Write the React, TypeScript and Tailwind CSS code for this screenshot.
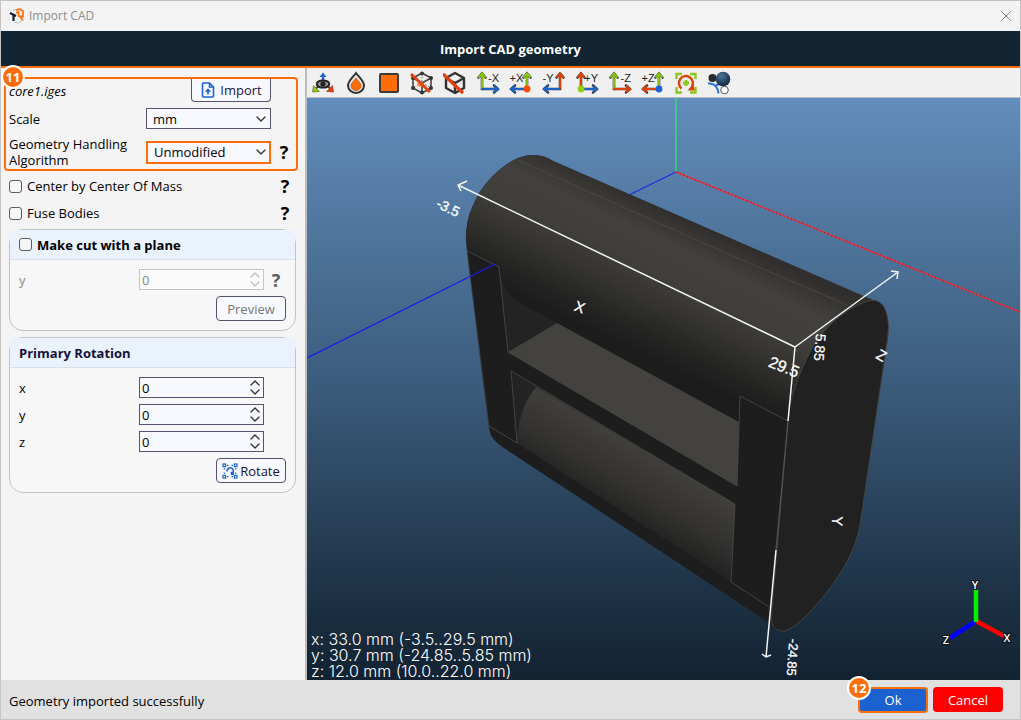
import React, { useState } from 'react';
import { X, ChevronDown, ChevronUp } from 'lucide-react';

const GREEN = '#86c40f';
const RED = '#dc430b';
const BLUE = '#1f62c4';

interface AxisIconProps {
  label: string;
  side: 'left' | 'right';
  up: string;
  across: string;
  dot?: string;
}

// side = where the vertical arrow stands, the horizontal one points away from it
const AxisIcon: React.FC<AxisIconProps> = ({ label, side, up, across, dot }) => {
  const x = side === 'left' ? 6 : 18;
  const tip = side === 'left' ? 22 : 2;
  const back = side === 'left' ? 18 : 6;
  const upArrow = `M${x} 18V3M${x - 3.5} 6.5L${x} 2.5L${x + 3.5} 6.5`;
  const acrossArrow = `M${x} 18H${tip}M${back} 14.5L${tip} 18L${back} 21.5`;
  return (
    <svg viewBox="0 0 24 24" className="size-6" fill="none">
      <path d={upArrow} stroke="#3a3a3a" strokeWidth="2.6" strokeLinecap="round" />
      <path d={acrossArrow} stroke="#3a3a3a" strokeWidth="2.6" strokeLinecap="round" />
      <path d={upArrow} stroke={up} strokeWidth="1.9" />
      <path d={acrossArrow} stroke={across} strokeWidth="1.9" />
      {dot && <circle cx={x} cy="18" r="3.4" fill={dot} />}
      <text
        x={side === 'left' ? 23 : 0.5}
        y="11"
        textAnchor={side === 'left' ? 'end' : 'start'}
        fontSize="11"
        fill="#222"
        className="font-['Liberation_Sans',sans-serif]"
      >
        {label}
      </text>
    </svg>
  );
};

const cube = 'M12 2L21 7V17L12 22L3 17V7ZM3 7L12 12L21 7M12 12V22';

const tools = [
  {
    name: 'Rotate view',
    icon: (
      <svg viewBox="0 0 24 24" className="size-6" fill="none">
        <path d="M12 11V5" stroke={BLUE} strokeWidth="2.4" />
        <path d="M8.500 6L12 1.500L15.500 6Z" fill={BLUE} />
        <path d="M8 15L4 18M16 15L20 18" stroke="#444" strokeWidth="2" />
        <path d="M2.500 14.500L1.500 21L8.500 20.500Z" fill="#8cc81c" stroke="#456b08" strokeWidth=".6" />
        <path d="M21.500 14.500L22.500 21L15.500 20.500Z" fill="#e2410e" stroke="#8d2a0a" strokeWidth=".6" />
        <ellipse cx="12" cy="13" rx="6.200" ry="3.600" fill="#9b9b9b" stroke="#222" strokeWidth="2" />
        <circle cx="12" cy="13" r="2.600" fill="#222" />
      </svg>
    ),
  },
  {
    name: 'Material',
    icon: (
      <svg viewBox="0 0 24 24" className="size-6">
        <path d="M12 2C15.500 6.500 20 10 20 14.500A8 7.500 0 0 1 4 14.500C4 10 8.500 6.500 12 2Z" fill="#e4e4e4" stroke="#333" strokeWidth="2" />
        <path d="M12 7C14 10 17 12.300 17 14.800A5 4.700 0 0 1 7 14.800C7 12.300 10 10 12 7Z" fill="#ff6d0a" stroke="#b5500f" strokeWidth=".7" />
      </svg>
    ),
  },
  {
    name: 'Solid',
    icon: (
      <svg viewBox="0 0 24 24" className="size-6">
        <rect x="3" y="3" width="18" height="18" rx="1" fill="#ff6d0a" stroke="#3a3a3a" strokeWidth="2" />
      </svg>
    ),
  },
  {
    name: 'Hide vertices',
    icon: (
      <svg viewBox="0 0 24 24" className="size-6" fill="none">
        <path d={cube} stroke="#444" strokeWidth="1.600" />
        <path d="M12 2V12L3 17M12 12L21 17" stroke="#777" strokeWidth="1" strokeDasharray="2 1.500" />
        <g fill="#333">
          <circle cx="12" cy="2.500" r="2" /><circle cx="21" cy="7" r="2" /><circle cx="21" cy="17" r="2" />
          <circle cx="12" cy="21.500" r="2" /><circle cx="3" cy="17" r="2" /><circle cx="3" cy="7" r="2" />
        </g>
        <circle cx="10" cy="13" r="2.800" fill="#ff8a3c" />
        <path d="M1 3L20 21" stroke="#e2410e" strokeWidth="3" />
      </svg>
    ),
  },
  {
    name: 'Hide edges',
    icon: (
      <svg viewBox="0 0 24 24" className="size-6" fill="none">
        <path d={cube} stroke="#333" strokeWidth="2.400" strokeLinejoin="round" />
        <path d="M0 3L20 22" stroke="#e2410e" strokeWidth="3.200" />
      </svg>
    ),
  },
  { name: 'View -X', icon: <AxisIcon label="-X" side="left" up={GREEN} across={BLUE} /> },
  { name: 'View +X', icon: <AxisIcon label="+X" side="right" up={GREEN} across={BLUE} dot="#ff4a0a" /> },
  { name: 'View -Y', icon: <AxisIcon label="-Y" side="right" up={RED} across={BLUE} /> },
  { name: 'View +Y', icon: <AxisIcon label="+Y" side="left" up={RED} across={BLUE} dot="#8fd010" /> },
  { name: 'View -Z', icon: <AxisIcon label="-Z" side="left" up={GREEN} across={RED} /> },
  { name: 'View +Z', icon: <AxisIcon label="+Z" side="right" up={GREEN} across={RED} dot="#1b62d8" /> },
  {
    name: 'Fit to view',
    icon: (
      <svg viewBox="0 0 24 24" className="size-6" fill="none">
        <path d="M2.500 8V3H8M16 3H21.500V8M21.500 16V21.500H16M8 21.500H2.500V16" stroke="#8cc81c" strokeWidth="2.400" />
        <path d="M7.500 17.500A7 7 0 1 1 18 15.500" stroke={RED} strokeWidth="2.400" />
        <path d="M13.500 19.500L20.500 19.500L19.500 12.500Z" fill={RED} />
        <path d="M12 9V15M9 12H15" stroke="#8cc81c" strokeWidth="2.800" />
      </svg>
    ),
  },
  {
    name: 'Scene objects',
    icon: (
      <svg viewBox="0 0 24 24" className="size-6" fill="none">
        <defs>
          <radialGradient id="ball" cx=".4" cy=".3" r=".7">
            <stop offset="0" stopColor="#4d779d" />
            <stop offset="1" stopColor="#10283d" />
          </radialGradient>
        </defs>
        <path d="M1 12.500C6 12 10.500 14 11.500 22.500M9 14.500L14 12" stroke="#2b6fe0" strokeWidth="2" />
        <circle cx="5.500" cy="7" r="4" fill="#252b28" />
        <circle cx="16" cy="8" r="7.300" fill="url(#ball)" />
        <circle cx="17.500" cy="19" r="3.800" fill="#fff" stroke="#555" strokeWidth="1" />
      </svg>
    ),
  },
];

const Help = ({ disabled }: { disabled?: boolean }) => (
  <button
    type="button"
    aria-label="Help"
    disabled={disabled}
    className={`w-4 text-center text-lg leading-5 font-bold ${disabled ? 'text-[#5c5c5c]' : 'text-black'}`}
  >
    ?
  </button>
);

interface SelectProps {
  id: string;
  options: string[];
  active?: boolean;
}

const Select: React.FC<SelectProps> = ({ id, options, active }) => (
  <div className="relative flex w-[125px] shrink-0 items-center">
    <select
      id={id}
      className={`block w-full appearance-none bg-[#f8f9ff] pl-1.5 pr-5 outline-none ${
        active ? 'h-[23px] border-2 border-[#ff6d0a]' : 'h-[21px] border border-[#555273]'
      }`}
    >
      {options.map((o) => <option key={o}>{o}</option>)}
    </select>
    <ChevronDown size={16} strokeWidth={2} className="pointer-events-none absolute right-0.5 text-[#333]" />
  </div>
);

interface SpinProps {
  id: string;
  disabled?: boolean;
}

const SpinBox: React.FC<SpinProps> = ({ id, disabled }) => {
  const [value, setValue] = useState(0);
  return (
    <div className={`flex h-[21px] w-[125px] shrink-0 items-center border ${
      disabled ? 'border-[#c4c4c8] bg-[#fbfbfb] text-[#8a8a8a]' : 'border-[#555273] bg-[#f8f9ff]'
    }`}>
      <input
        id={id}
        inputMode="decimal"
        value={value}
        disabled={disabled}
        onChange={(e) => setValue(Number(e.target.value) || 0)}
        className="h-full min-w-0 flex-1 bg-transparent pl-0.5 outline-none"
      />
      <div className={`flex flex-col ${disabled ? 'text-[#c0c0c0]' : 'text-[#333]'}`}>
        <button type="button" aria-label="Increase" disabled={disabled} onClick={() => setValue(value + 1)} className="flex h-[9px] items-center overflow-hidden">
          <ChevronUp size={16} strokeWidth={2} />
        </button>
        <button type="button" aria-label="Decrease" disabled={disabled} onClick={() => setValue(value - 1)} className="flex h-[9px] items-center overflow-hidden">
          <ChevronDown size={16} strokeWidth={2} />
        </button>
      </div>
    </div>
  );
};

const checkboxClass =
  'size-[13px] shrink-0 appearance-none rounded-[3px] border border-[#5c5c5c] bg-[#f6f6f6] checked:bg-[#1b62d0]';

const smallButton =
  'flex items-center justify-center gap-0.5 border border-[#555273] bg-[#f8f9ff] font-medium';

const Badge = ({ children, className }: { children: React.ReactNode; className: string }) => (
  <span className={`absolute z-10 flex size-6 items-center justify-center rounded-full border-2 border-white bg-[#ff6d0a] font-bold text-white ${className}`}>
    {children}
  </span>
);

const Sidebar = () => (
  <aside className="w-[306px] shrink-0 border-r-2 border-[#bdbdbd] bg-[#f4f4f4] pt-[9px]">
    <div className="relative ml-[3px] mr-[7px] rounded border-2 border-[#ff6d0a] pb-px pl-[3px] pr-1">
      <Badge className="-left-[5px] -top-[14px]">11</Badge>
      <div className="flex h-[23px] items-center justify-between pr-[21px]">
        <span className="italic">core1.iges</span>
        <button type="button" className={`${smallButton} h-full w-20 gap-1 rounded-b border-t-0 text-[#1d1437]`}>
          <svg viewBox="0 0 16 16" className="size-4" fill="none" stroke="#1b62d0" strokeWidth="1.600">
            <path d="M9.500 1H3.500Q2.500 1 2.500 2V14Q2.500 15 3.500 15H12.500Q13.500 15 13.500 14V5Z" />
            <path d="M9.500 1V5H13.500M8 12.500V8M5.800 9.800L8 7.600L10.200 9.800" />
          </svg>
          Import
        </button>
      </div>
      <div className="mt-1.5 flex items-center justify-between pr-[21px]">
        <label htmlFor="scale">Scale</label>
        <Select id="scale" options={['mm', 'cm', 'm', 'inch']} />
      </div>
      <div className="mt-[7px] flex items-center">
        <label htmlFor="algorithm" className="flex-1">Geometry Handling Algorithm</label>
        <Select id="algorithm" options={['Unmodified', 'Simplified']} active />
        <div className="ml-[5px]"><Help /></div>
      </div>
    </div>

    <div className="flex flex-col gap-[7px] pl-2 pr-3 pt-[5px]">
      <div className="flex h-5 items-center gap-[5px]">
        <input id="center" type="checkbox" className={checkboxClass} />
        <label htmlFor="center" className="flex-1">Center by Center Of Mass</label>
        <Help />
      </div>
      <div className="flex h-5 items-center gap-[5px]">
        <input id="fuse" type="checkbox" className={checkboxClass} />
        <label htmlFor="fuse" className="flex-1">Fuse Bodies</label>
        <Help />
      </div>
    </div>

    <section className="ml-2 mr-[9px] mt-1.5 rounded-[14px] border border-[#c3c3c3] bg-[#f7f7f7] pb-[9px]">
      <div className="flex h-[30px] items-center gap-[5px] border-b border-[#dadfe8] bg-[#eaf2fe] pl-[9px] font-bold">
        <input id="cut" type="checkbox" className={checkboxClass} />
        <label htmlFor="cut">Make cut with a plane</label>
      </div>
      <div className="mt-[9px] flex items-center pl-[9px]">
        <label htmlFor="cut-y" className="w-30 text-[#8a8a8a]">y</label>
        <SpinBox id="cut-y" disabled />
        <div className="ml-1 flex"><Help disabled /></div>
      </div>
      <div className="mt-1.5 flex justify-end pr-[9px]">
        <button type="button" disabled className={`${smallButton} h-[25px] w-[70px] rounded text-[#777]`}>Preview</button>
      </div>
    </section>

    <section className="ml-2 mr-[9px] mt-1.5 rounded-[14px] border border-[#c3c3c3] bg-[#f7f7f7] pb-[9px]">
      <h2 className="flex h-[30px] items-center border-b border-[#dadfe8] bg-[#eaf2fe] pl-[9px] font-bold text-[#15103a]">
        Primary Rotation
      </h2>
      <div className="mt-[9px] flex flex-col gap-1.5 pl-[9px]">
        {['x', 'y', 'z'].map((axis) => (
          <div key={axis} className="flex items-center">
            <label htmlFor={`rotate-${axis}`} className="w-30">{axis}</label>
            <SpinBox id={`rotate-${axis}`} />
          </div>
        ))}
      </div>
      <div className="mt-1.5 flex justify-end pr-[9px]">
        <button type="button" className={`${smallButton} h-[25px] w-[70px] rounded text-[#14102e]`}>
          <svg viewBox="0 0 16 16" className="size-4" fill="none" stroke="#1b62d0" strokeWidth="1.200">
            <rect x="1" y="1" width="2.600" height="2.600" />
            <rect x="12.400" y="1" width="2.600" height="2.600" />
            <rect x="1" y="12.400" width="2.600" height="2.600" />
            <rect x="12.400" y="12.400" width="2.600" height="2.600" />
            <path d="M5 2.300H6.500M9.500 2.300H11M5 13.700H6.500M9.500 13.700H11M2.300 5V6.500M2.300 9.500V11M13.700 5V6.500M13.700 9.500V11" />
            <path d="M5 8.500A3.200 3.200 0 1 1 9.500 11M9.500 8.800V11.200H12" strokeWidth="1.500" />
          </svg>
          Rotate
        </button>
      </div>
    </section>
  </aside>
);

const Model = () => (
  <svg viewBox="307 98 713 582" preserveAspectRatio="xMidYMid slice" className="absolute inset-0 size-full" fill="none">
    <defs>
      <linearGradient id="barrel" gradientUnits="userSpaceOnUse" x1="700" y1="226" x2="635" y2="361">
        <stop offset="0" stopColor="#302f2d" />
        <stop offset=".2" stopColor="#42413d" />
        <stop offset=".4" stopColor="#403f3b" />
        <stop offset=".6" stopColor="#343330" />
        <stop offset=".8" stopColor="#242423" />
        <stop offset=".95" stopColor="#1c1c1c" />
      </linearGradient>
      <linearGradient id="lower" gradientUnits="userSpaceOnUse" x1="640" y1="448" x2="600" y2="516">
        <stop offset="0" stopColor="#403f3b" />
        <stop offset=".5" stopColor="#333230" />
        <stop offset="1" stopColor="#1d1d1d" />
      </linearGradient>
    </defs>

    <path d="M676 98V172" stroke="#2fdc78" strokeWidth="1.500" />
    <path d="M676 172L629 195" stroke="#2828e6" strokeWidth="1.200" />
    <path d="M676 172L1020 312" stroke="#f0303c" strokeWidth="1.500" />
    <path d="M676 172L1020 312" stroke="#a81822" strokeWidth="1.200" strokeDasharray="1 3" />

    {/* body */}
    <path
      d="M467 250C465 232 467 219 472 208C481 184 500 166 518 158C531 153 543 154 553 161L866 298C878 302 886 308 888 322C889 332 888 340 886 349L860 525C855 552 842 572 827 592C812 611 797 627 785 631C778 632 773 629 771 624L504 448C495 442 490 437 489 427Z"
      fill="#1d1d1d"
    />
    <path
      d="M467 250C465 232 467 219 472 208C481 184 500 166 518 158C531 153 543 154 553 161L873 300L790 421L740 396L739 422L557 323L519 302C506 294 502 280 499 267Z"
      fill="url(#barrel)"
    />
    <path
      d="M788 421C790 398 797 377 812 348C828 322 852 304 873 300C884 301 888 312 888.500 327C888 336 887 342 886 349L860 525C855 552 842 572 827 592C812 611 797 627 785 631C778 632 773 628 771 620Z"
      fill="#212121"
      stroke="#4b4a47"
      strokeWidth=".8"
    />
    <path d="M499 267C502 280 506 294 519 302L557 323L508 352Z" fill="#232323" />
    <path d="M508 352L557 323L739 422L737 486Z" fill="#43423e" />
    <path d="M511 371L536 387C523 403 518 420 517 443Z" fill="#232323" />
    <path d="M536 387L735 504L731 582L517 443C518 420 523 403 536 387Z" fill="url(#lower)" />
    <g stroke="#484745" strokeWidth=".9">
      <path d="M467 250L489 427" stroke="#3c3c3b" />
      <path d="M467 251L499 267L508 352L737 486" />
      <path d="M735 504L511 371L517 443L489 426" />
      <path d="M788 421L740 396L737 486M735 504L731 582L771 608" />
      <path d="M518 160L730 255L847 305" stroke="#4b4a46" />
      <path d="M788 421L776 550" stroke="#555" strokeWidth="1.200" />
    </g>

    <path d="M307 358L495 264" stroke="#1a1af0" strokeWidth="1.300" />

    {/* dimensions */}
    <g stroke="#f5f5f5" strokeWidth="1.500">
      <path d="M788 421L795 347L458 185M467 181L458 185L461 191" />
      <path d="M795 347L898 272M891 271L898 272L897 279" />
      <path d="M776 550L766 657M762 654L766 657L771 655" />
    </g>
    <g fill="#fff" stroke="#fff" strokeWidth=".3" fontSize="15" textAnchor="middle" className="font-['Liberation_Sans',sans-serif]">
      <text transform="translate(446 212) rotate(26)" fontSize="14">-3.5</text>
      <text transform="translate(782 372) rotate(22)" fontSize="16">29.5</text>
      <text transform="translate(815 347) rotate(94)" fontSize="14">5.85</text>
      <text transform="translate(788 657) rotate(94)" fontSize="13">-24.85</text>
      <text transform="translate(578 312) rotate(20)">X</text>
      <text transform="translate(879 360) rotate(30)">Z</text>
      <text transform="translate(832 521) rotate(92)">Y</text>
    </g>

    {/* orientation triad */}
    <g strokeWidth="4.500">
      <path d="M976 621L950 638" stroke="#0000ff" />
      <path d="M976 621L1004 636" stroke="#ff0000" />
      <path d="M976 622V590" stroke="#00f000" />
    </g>
    <g fill="#fff" stroke="#111" strokeWidth="2" paintOrder="stroke" fontSize="11" fontWeight="600" textAnchor="middle" className="font-['Open_Sans',sans-serif]">
      <text x="975" y="589">Y</text>
      <text x="1007" y="642">X</text>
      <text x="946" y="644">Z</text>
    </g>
  </svg>
);

const extents = [
  'x: 33.0 mm (-3.5..29.5 mm)',
  'y: 30.7 mm (-24.85..5.85 mm)',
  'z: 12.0 mm (10.0..22.0 mm)',
];

export default function App() {
  return (
    <div className="flex h-screen min-h-[600px] flex-col border border-[#c4c4c4] bg-[#f4f4f4] font-['Open_Sans','Noto_Sans',sans-serif] text-[13px] leading-4 text-black">
      <header className="flex h-[30px] shrink-0 items-center bg-[#f3f3f3] pl-2 pr-[5px]">
        <svg viewBox="0 0 16 16" className="size-4" fill="none">
          <path d="M4 2.500L8 1M5 14L9 15L13 12.500" stroke="#c4c4c4" strokeWidth="1" />
          <path d="M1 5L7 8M4.500 7V13" stroke="#14222f" strokeWidth="2.200" />
          <path d="M7 2.500L10.500 1L14 3V8.500L9.500 8V4L7 5M10.500 8L14 12.500" stroke="#ff6d0a" strokeWidth="1.700" />
        </svg>
        <span className="ml-1 flex-1 text-xs text-[#8e8e8e]">Import CAD</span>
        <button type="button" aria-label="Close" className="text-[#777]"><X size={18} strokeWidth={1.200} /></button>
      </header>
      <div className="flex h-[37px] shrink-0 items-center justify-center border-b-2 border-[#ff6d0a] bg-[#122331]">
        <h1 className="font-bold text-white">Import CAD geometry</h1>
      </div>

      <main className="flex min-h-0 flex-1">
        <Sidebar />
        <div className="flex min-w-0 flex-1 flex-col">
          <div role="toolbar" className="flex h-[30px] shrink-0 items-center gap-[9px] border-b border-[#b5bcc4] bg-[#f0f0f0] pl-1">
            {tools.map((tool) => (
              <button key={tool.name} type="button" aria-label={tool.name} className="shrink-0">{tool.icon}</button>
            ))}
          </div>
          <div className="relative flex flex-1 items-end overflow-hidden bg-linear-to-b from-[#628dbc] via-[#3b5b7b] to-[#122231]">
            <Model />
            <div className="relative pl-1 pb-px font-['Inter',sans-serif] text-base leading-4 font-light text-white">
              {extents.map((line) => <p key={line}>{line}</p>)}
            </div>
          </div>
        </div>
      </main>

      <footer className="flex h-[39px] shrink-0 items-center gap-[5px] bg-[#e1e1e1] pl-2 pr-[17px]">
        <span className="flex-1 pt-0.5">Geometry imported successfully</span>
        <div className="relative">
          <Badge className="-left-[11px] -top-[11px]">12</Badge>
          <button type="button" className="h-[26px] w-[70px] rounded border-2 border-[#ff6d0a] bg-[#1b62d0] font-medium text-white">Ok</button>
        </div>
        <button type="button" className="h-[25px] w-[70px] rounded bg-[#ff0000] font-medium text-white">Cancel</button>
      </footer>
    </div>
  );
}
